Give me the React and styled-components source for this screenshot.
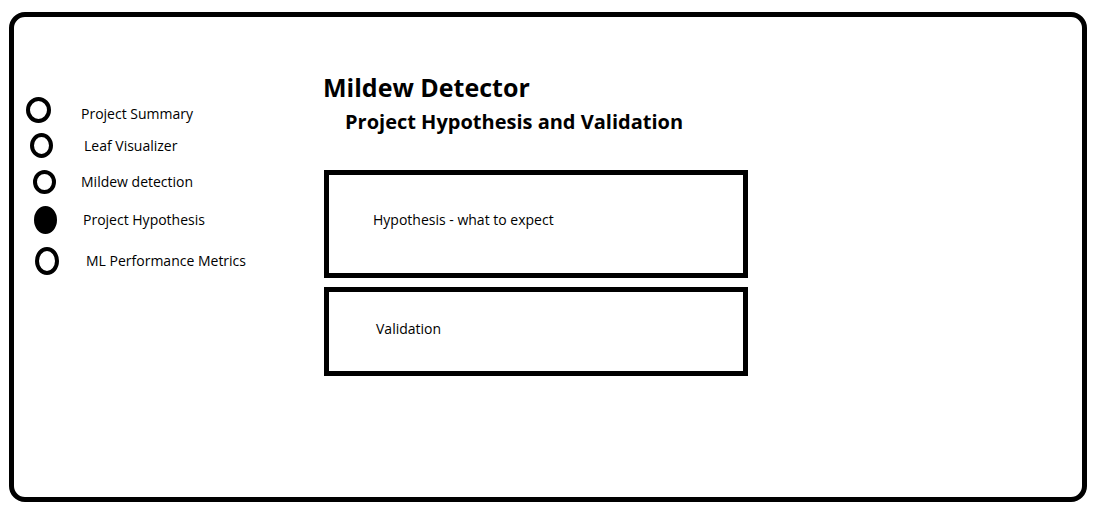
import React from 'react';
import styled, { createGlobalStyle } from 'styled-components';

const GlobalStyle = createGlobalStyle`
    html, body {
        margin: 0;
        padding: 0;
        background: white;
    }
    body {
        font-family: "Open Sans", "Noto Sans", sans-serif;
        color: black;
    }
`

const pages = [
    { label: 'Project Summary', indent: 12, gap: 30, w: 25, h: 26, space: 80, drop: 4 },
    { label: 'Leaf Visualizer', indent: 16, gap: 31, w: 23, h: 25, space: 10 },
    { label: 'Mildew detection', indent: 19, gap: 25, w: 23, h: 24, space: 12 },
    { label: 'Project Hypothesis', indent: 20, gap: 26, w: 23, h: 28, space: 12, active: true },
    { label: 'ML Performance Metrics', indent: 21, gap: 27, w: 24, h: 28, space: 13 },
];

const App = () => {
    return (<>
        <GlobalStyle />
        <Frame>
            <Sidebar>
                {
                    pages.map(page => {
                        return <NavItem key={page.label} indent={page.indent} space={page.space}>
                            <Radio w={page.w} h={page.h} active={page.active} />
                            <NavLabel gap={page.gap} drop={page.drop || 0}>{page.label}</NavLabel>
                        </NavItem>
                    })
                }
            </Sidebar>
            <Main>
                <Title>Mildew Detector</Title>
                <Subtitle>Project Hypothesis and Validation</Subtitle>
                <Section height={108} top={36} padTop={36} padLeft={44}>
                    Hypothesis - what to expect
                </Section>
                <Section height={89} top={9} padTop={28} padLeft={47}>
                    Validation
                </Section>
            </Main>
        </Frame>
    </>);
}

export default App;

const Frame = styled.div`
    box-sizing: border-box;
    margin: 12px 0 0 9px;
    width: 1078px;
    height: 490px;
    border: 5px solid black;
    border-radius: 16px;
    display: flex;
    flex-direction: row;
`

const Sidebar = styled.nav`
    width: 309px;
    display: flex;
    flex-direction: column;
`

const NavItem = styled.div`
    display: flex;
    align-items: center;
    margin-top: ${props => props.space}px;
    padding-left: ${props => props.indent}px;
`

const Radio = styled.span`
    box-sizing: border-box;
    flex: none;
    width: ${props => props.w}px;
    height: ${props => props.h}px;
    border-radius: 50%;
    border: 4px solid black;
    background: ${props => props.active ? 'black' : 'white'};
`

const NavLabel = styled.span`
    margin-left: ${props => props.gap}px;
    padding-top: ${props => props.drop * 2}px;
    font-size: 14px;
    line-height: 18px;
`

const Main = styled.main`
    display: flex;
    flex-direction: column;
    align-items: flex-start;
    padding-top: 55px;
`

const Title = styled.h1`
    margin: 0;
    font-size: 25px;
    line-height: 30px;
    font-weight: 700;
`

const Subtitle = styled.h2`
    margin: 8px 0 0 22px;
    font-size: 20px;
    line-height: 24px;
    font-weight: 700;
`

const Section = styled.div`
    box-sizing: border-box;
    width: 424px;
    height: ${props => props.height}px;
    margin: ${props => props.top}px 0 0 1px;
    border: 5px solid black;
    padding: ${props => props.padTop}px 0 0 ${props => props.padLeft}px;
    font-size: 14px;
    line-height: 18px;
`
